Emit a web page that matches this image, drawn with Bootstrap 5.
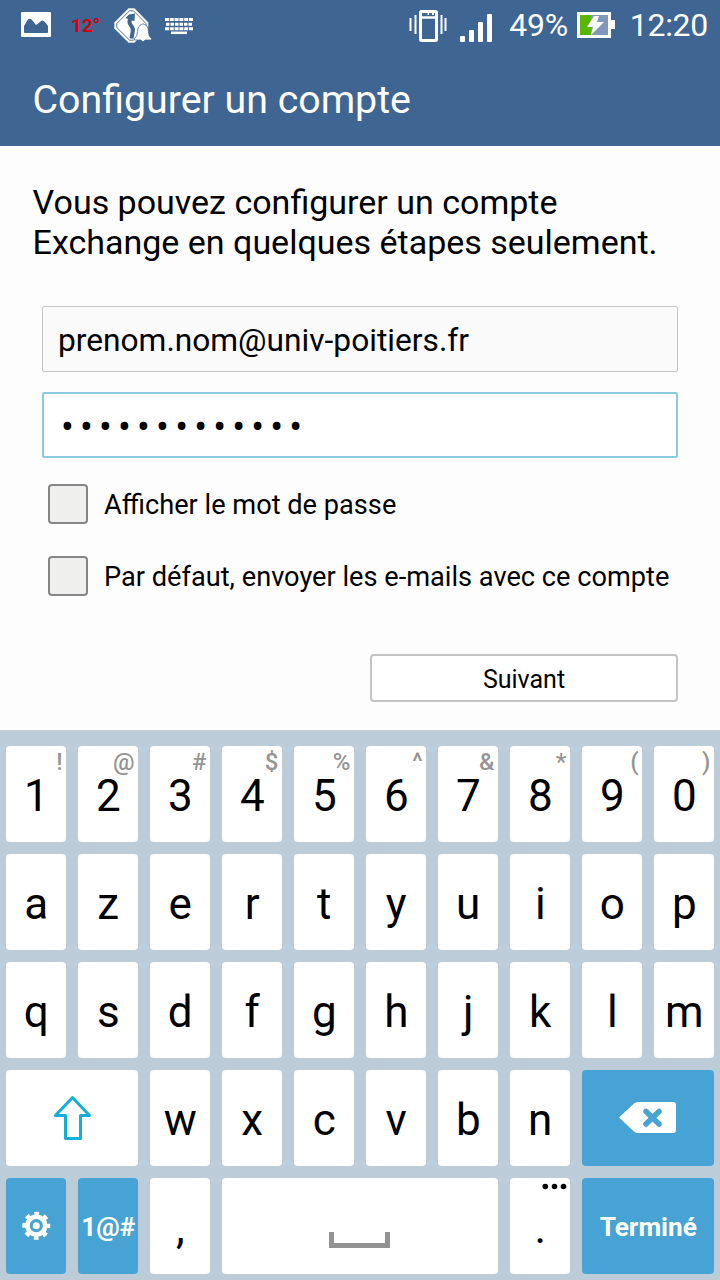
<!DOCTYPE html>
<html lang="fr">
<head>
<meta charset="utf-8">
<meta name="viewport" content="width=device-width, initial-scale=1">
<title>Configurer un compte</title>
<link href="https://cdn.jsdelivr.net/npm/bootstrap@5.3.0/dist/css/bootstrap.min.css" rel="stylesheet">
<style>
body{font-family:Roboto,"Liberation Sans",sans-serif;background:#fdfdfd;color:#000;width:720px;height:1280px;overflow:hidden}
.topbar{background:#3f6592;color:#fff;height:146px}
.status-row{height:52px;padding:0 12px 0 20px}
.status-row svg{flex:none;display:block}
.status-num{font-size:32px;line-height:50px;letter-spacing:-.3px;padding-bottom:2px;white-space:nowrap}
.temp{font-size:19px;line-height:50px;font-weight:700;color:#d4000b;width:27px;margin-left:19px;white-space:nowrap}
.title-row{height:94px;padding:1px 32.500px 0;font-size:39.3px;line-height:94px}
.setup{height:584px;padding:36px 42px 0}
.intro{font-size:34px;line-height:40px;margin:0 -9px 44px -9.400px;white-space:nowrap}
.field{height:66px;border:1px solid #c3c3c3;border-radius:2px;background:#fafafa;font-size:31.7px;line-height:68px;padding:0 15px;color:#000;box-shadow:none}
.field.field-active{border:2px solid #8acbe2;background:#fff;margin-top:20px;padding:0 14px;line-height:67px}
.dots{font-size:38px;letter-spacing:6.2px;margin-left:3px}
.option{height:72px;padding-left:6px;font-size:27.2px;gap:16px;white-space:nowrap}
.option span{padding-top:2px}
.box-check.form-check-input{width:40px;height:40px;margin:0;border:2px solid #858585;border-radius:4px;background-color:#efefee;flex:none}
.options{margin-top:10px}
.next-btn{width:308px;height:48px;border:2px solid #c3c3c3;border-radius:4px;background:#fff;font-size:25px;line-height:44px;padding:2px 0 0;color:#000;margin-top:42px}
.keyboard{background:#bccdd9;height:550px;padding:16px 6px 6px;display:grid;grid-template-columns:repeat(10,60px);grid-auto-rows:96px;gap:12px}
.key{background:#fff;border:0;border-radius:4px;padding:0 0 0 .5px;position:relative;font-size:44px;line-height:100px;text-align:center;color:#000;display:block;height:96px}
.key.key-2{grid-column:span 2}
.key.key-4{grid-column:span 4}
.key.key-blue{background:#46a3d3;color:#fff;font-size:26.2px;font-weight:700;line-height:98px;white-space:nowrap}
.key.key-draw{padding:0}
.hint{position:absolute;top:2px;right:3.5px;font-size:24px;line-height:28px;font-weight:500;color:#959595}
.key svg{display:block}
.space-mark{width:61px;height:16px;border:5px solid #929292;border-top:0;margin:54px auto 26px 107px}
</style>
</head>
<body>
<header class="topbar">
  <div class="status-row d-flex align-items-center">
    <svg width="32" height="28" viewBox="0 0 32 28"><path fill="#fff" fill-rule="evenodd" d="M2 0h28q1 0 1 1v23q0 1-1 1H2q-1 0-1-1V1q0-1 1-1zM4 14v6q0 1 1 1h22q1 0 1-1v-6l-3-4q-3-3-5 0l-4 3-4-5q-3-3-5 1z"/></svg>
    <span class="temp">12°</span>
    <svg width="38" height="36" viewBox="0 0 38 36" style="margin-left:16px"><path fill="#fff" stroke="#c9d6e5" stroke-width=".8" d="M14.500.5h6L34 14.500v6L20.500 34.500h-6L.5 20.500v-6z"/><path fill="none" stroke="#58779e" d="M15.500 2.800h4L32 15.500v4L19.500 32.200h-4L2.800 19.500v-4z"/><path fill="none" stroke="#3f6592" stroke-width="4" d="M17 9q-3 5 0 8.500t1.500 7l-1 6"/><path fill="#3f6592" d="M11.500 10l3.500-3.500 6-1-.5 7.500-3-.5z"/><path fill="#3f6592" d="M24 35l13-13v13z"/><path fill="#fff" stroke="#3f6592" stroke-width=".8" d="M20.500 30.500q3-2 3-7 .5-6 4-7 1.500-1.500 3 0 3.500 1 4 7 0 5 3 7v1.500h-6.500q-2 3.500-4 0h-6.500z"/></svg>
    <svg width="30" height="18" viewBox="0 0 30 18" style="margin-left:12px"><g fill="none" stroke="#fff" stroke-width="3"><path d="M1 2.500h28" stroke-dasharray="4 .8"/><path d="M2 7.300h26" stroke-dasharray="3.500 1"/><path d="M1 11.800h28" stroke-dasharray="4 .8"/><path d="M7 15.800h16" stroke-width="2.500"/></g></svg>
    <svg width="38" height="34" viewBox="0 0 38 34" class="ms-auto"><g fill="none" stroke="#fff"><path stroke-width="2" d="M1.500 9v13M6.500 6v19M32.500 6v19M36.500 9v13"/><rect x="11.500" y="2.500" width="16" height="29" rx="1" stroke-width="3"/><path stroke-width="2.500" d="M11 8.500h17"/><path stroke-width="2" d="M18.500 5h1.500M23 5h2"/></g></svg>
    <svg width="34" height="32" viewBox="0 0 34 32" style="margin-left:13px;margin-top:1px"><g fill="#fff"><rect x="0" y="25" width="5" height="6" rx="1"/><rect x="9" y="19" width="5" height="12" rx="1"/><rect x="18" y="11" width="5" height="20" rx="1"/><rect x="27" y="3" width="5" height="28" rx="1"/></g></svg>
    <span class="status-num" style="margin-left:15px">49%</span>
    <svg width="39" height="28" viewBox="0 0 39 28" style="margin-left:9px;margin-bottom:2px"><path fill="#fff" d="M0 1h34v8h4v9h-4v9H0z"/><path fill="#5bb502" d="M3 4h11v20H3z"/><path fill="#8198b8" d="M14 4h17v20H14z"/><path fill="#fff" d="M17 5h5l-2 6h7L14 24l2-8h-6z"/></svg>
    <span class="status-num" style="margin-left:14px">12:20</span>
  </div>
  <div class="title-row">Configurer un compte</div>
</header>
<main class="setup">
  <p class="intro">Vous pouvez configurer un compte<br>Exchange en quelques étapes seulement.</p>
  <div class="form-control field">prenom.nom@univ-poitiers.fr</div>
  <div class="form-control field field-active"><span class="dots">•••••••••••••</span></div>
  <div class="options">
    <label class="option d-flex align-items-center"><input type="checkbox" class="form-check-input box-check"><span>Afficher le mot de passe</span></label>
    <label class="option d-flex align-items-center"><input type="checkbox" class="form-check-input box-check"><span>Par défaut, envoyer les e-mails avec ce compte</span></label>
  </div>
  <div class="d-flex justify-content-end"><button class="btn next-btn">Suivant</button></div>
</main>
<section class="keyboard">
  <button class="key">1<span class="hint">!</span></button><button class="key">2<span class="hint">@</span></button><button class="key">3<span class="hint">#</span></button><button class="key">4<span class="hint">$</span></button><button class="key">5<span class="hint">%</span></button><button class="key">6<span class="hint">^</span></button><button class="key">7<span class="hint">&amp;</span></button><button class="key">8<span class="hint">*</span></button><button class="key">9<span class="hint">(</span></button><button class="key">0<span class="hint">)</span></button>
  <button class="key">a</button><button class="key">z</button><button class="key">e</button><button class="key">r</button><button class="key">t</button><button class="key">y</button><button class="key">u</button><button class="key">i</button><button class="key">o</button><button class="key">p</button>
  <button class="key">q</button><button class="key">s</button><button class="key">d</button><button class="key">f</button><button class="key">g</button><button class="key">h</button><button class="key">j</button><button class="key">k</button><button class="key">l</button><button class="key">m</button>
  <button class="key key-2 key-draw"><svg width="132" height="96" viewBox="0 0 132 96"><path fill="none" stroke="#12b0d8" stroke-width="3" stroke-linejoin="round" d="M66.500 27.500L83.500 45.500H74.500V68.500H59.500V45.500H49.500z"/></svg></button>
  <button class="key">w</button><button class="key">x</button><button class="key">c</button><button class="key">v</button><button class="key">b</button><button class="key">n</button>
  <button class="key key-2 key-blue key-draw"><svg width="132" height="96" viewBox="0 0 132 96"><path fill="#fff" d="M37 47.500L52 33.500q2-1.500 4-1.500h35q3 0 3 3v25q0 3-3 3H56q-2 0-4-1.500z"/><path fill="none" stroke="#46a3d3" stroke-width="5.500" stroke-linecap="round" d="M64 41.500l13 12.500M77 41.500L64 54"/></svg></button>
  <button class="key key-blue key-draw"><svg width="60" height="96" viewBox="0 0 60 96"><g fill="none" stroke="#fff"><circle cx="30.300" cy="47.700" r="8.900" stroke-width="4.600"/><circle cx="30.300" cy="47.700" r="12" stroke-width="4" stroke-dasharray="4.700 4.725" stroke-dashoffset="2.350"/></g><circle cx="30.300" cy="47.700" r="3.500" fill="#fff"/></svg></button>
  <button class="key key-blue">1@#</button>
  <button class="key">,</button>
  <button class="key key-4 key-draw"><div class="space-mark"></div></button>
  <button class="key">.<svg class="position-absolute top-0 end-0" width="30" height="18" viewBox="0 0 30 18"><circle cx="5.300" cy="8.500" r="2.800"/><circle cx="14.500" cy="8.500" r="2.800"/><circle cx="23.500" cy="8.500" r="2.800"/></svg></button>
  <button class="key key-2 key-blue">Terminé</button>
</section>
<script src="https://cdn.jsdelivr.net/npm/bootstrap@5.3.0/dist/js/bootstrap.bundle.min.js"></script>
</body>
</html>
